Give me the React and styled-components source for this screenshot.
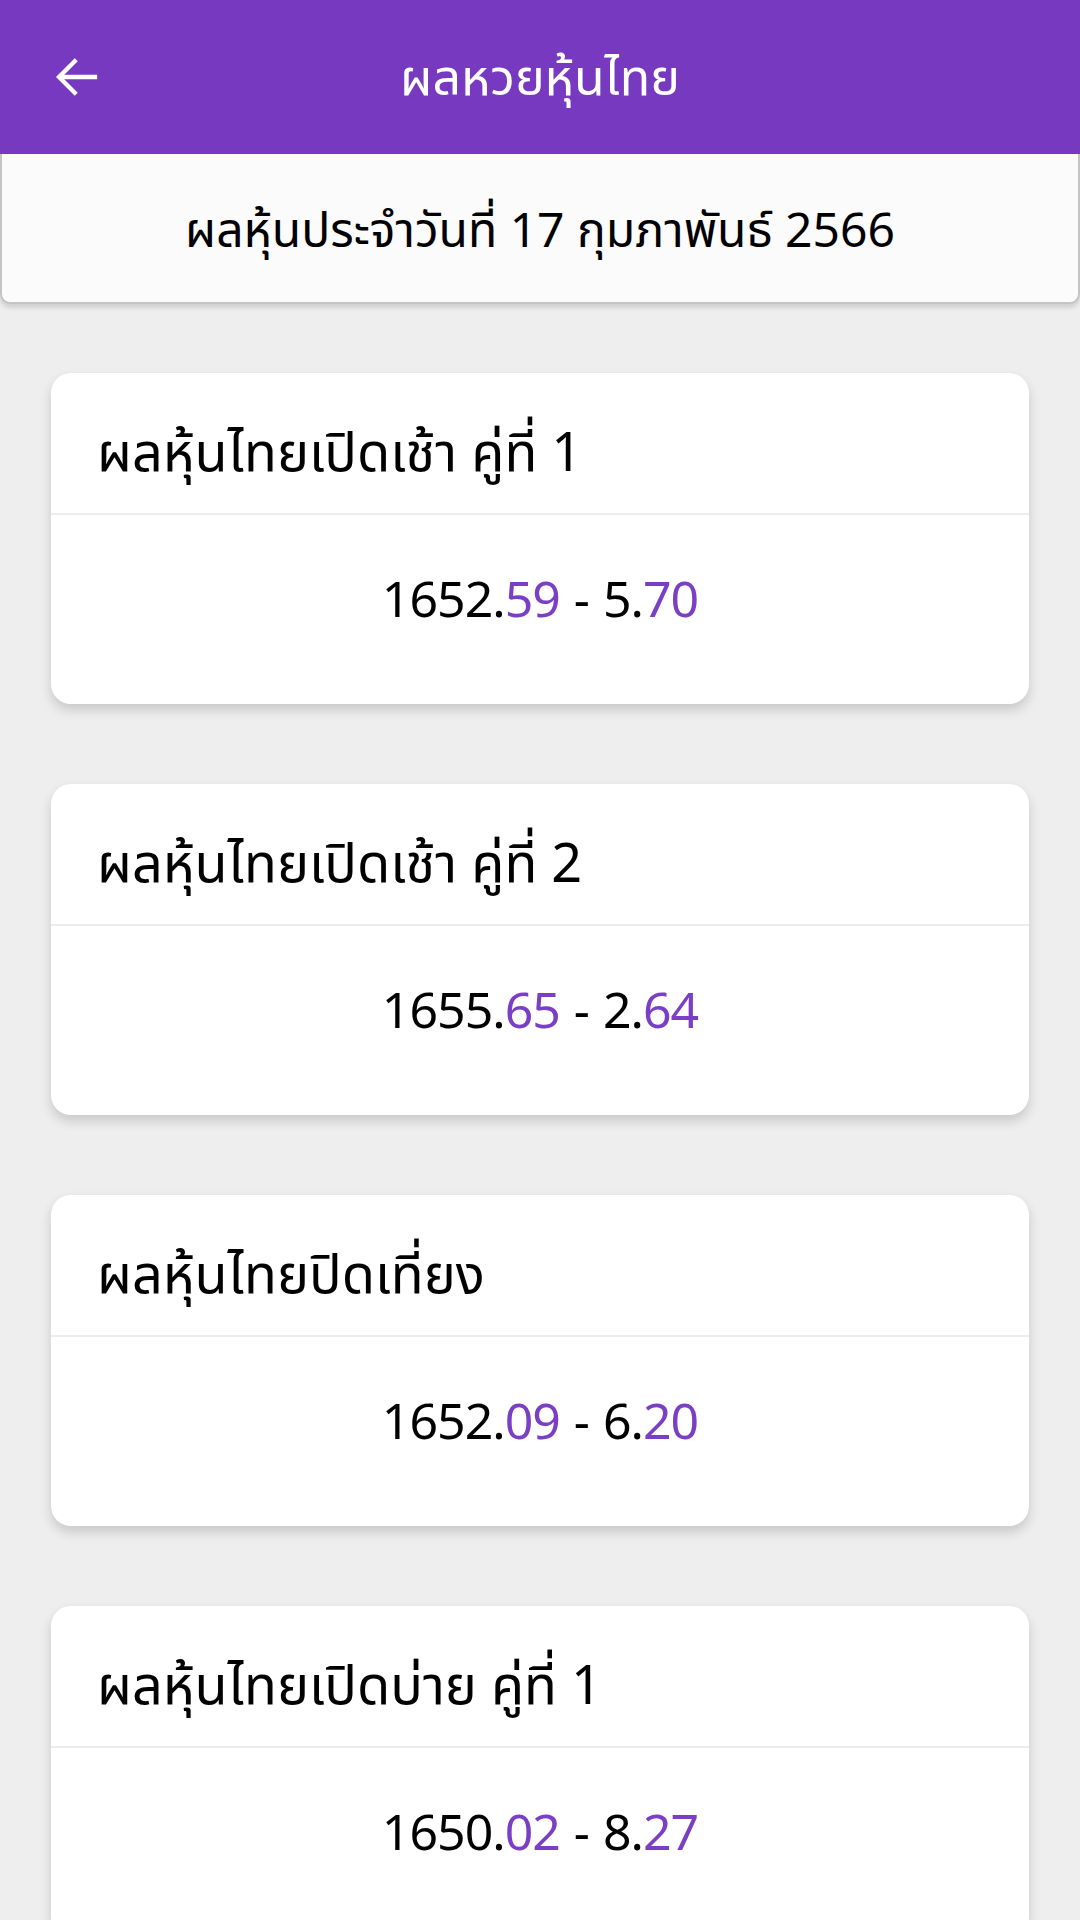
import React from "react";
import styled, { createGlobalStyle } from "styled-components";

const Global = createGlobalStyle`
  html, body { margin: 0; padding: 0; background: #eeeeee; }
  body { font-family: "Noto Sans Thai", "Noto Sans", "Open Sans", sans-serif; }
  * { box-sizing: border-box; }
`;

const Page = styled.div`
  width: 1080px;
  min-height: 1920px;
  background: #eeeeee;
  display: flex;
  flex-direction: column;
`;

const TopBar = styled.header`
  height: 154px;
  background: #7639c0;
  display: flex;
  align-items: center;
  position: relative;
  color: #fff;
`;

const BackButton = styled.button`
  position: absolute;
  left: 48px;
  top: 50%;
  transform: translateY(-50%);
  background: none;
  border: 0;
  padding: 0;
  width: 58px;
  height: 58px;
  display: flex;
  align-items: center;
  justify-content: center;
`;

const Title = styled.h1`
  flex: 1;
  margin: 0;
  padding-top: 6px;
  text-align: center;
  font-size: 50px;
  font-weight: 400;
  color: #fff;
`;

const DateBanner = styled.div`
  height: 150px;
  background: #fbfbfb;
  border: 2px solid #c4c4c4;
  border-top: 0;
  border-radius: 0 0 10px 10px;
  box-shadow: 0 4px 4px rgba(0, 0, 0, 0.12);
  display: flex;
  align-items: center;
  justify-content: center;
  padding-top: 8px;
  font-size: 48px;
  color: #000;
`;

const CardList = styled.main`
  display: flex;
  flex-direction: column;
  gap: 80px;
  padding: 69px 51px 0;
`;

const Card = styled.section`
  background: #fff;
  border-radius: 20px;
  box-shadow: 0 6px 12px rgba(0, 0, 0, 0.16);
  overflow: hidden;
`;

const CardHead = styled.div`
  height: 142px;
  display: flex;
  align-items: center;
  padding: 22px 46px 0;
  font-size: 54px;
  color: #000;
  border-bottom: 2px solid #ececec;
`;

const CardBody = styled.div`
  height: 189px;
  display: flex;
  align-items: center;
  justify-content: center;
  padding-bottom: 16px;
  font-size: 50px;
  letter-spacing: -1px;
  color: #000;
`;

const Dash = styled.span`
  margin: 0 14px;
`;

const Accent = styled.span`
  color: #7a3fc4;
`;

const data = [
  { title: "ผลหุ้นไทยเปิดเช้า คู่ที่ 1", a: ["1652.", "59"], b: ["5.", "70"] },
  { title: "ผลหุ้นไทยเปิดเช้า คู่ที่ 2", a: ["1655.", "65"], b: ["2.", "64"] },
  { title: "ผลหุ้นไทยปิดเที่ยง", a: ["1652.", "09"], b: ["6.", "20"] },
  { title: "ผลหุ้นไทยเปิดบ่าย คู่ที่ 1", a: ["1650.", "02"], b: ["8.", "27"] },
];

export default function App() {
  return (
    <Page>
      <Global />
      <TopBar>
        <BackButton aria-label="back">
          <svg width="54" height="54" viewBox="0 0 24 24" fill="none" stroke="#fff" strokeWidth="1.9" strokeLinecap="square">
            <path d="M20 12H5" />
            <path d="M11 5l-7 7 7 7" />
          </svg>
        </BackButton>
        <Title>ผลหวยหุ้นไทย</Title>
      </TopBar>
      <DateBanner>ผลหุ้นประจำวันที่ 17 กุมภาพันธ์ 2566</DateBanner>
      <CardList>
        {data.map((d) => (
          <Card key={d.title}>
            <CardHead>{d.title}</CardHead>
            <CardBody>
              {d.a[0]}
              <Accent>{d.a[1]}</Accent>
              <Dash>-</Dash>
              {d.b[0]}
              <Accent>{d.b[1]}</Accent>
            </CardBody>
          </Card>
        ))}
      </CardList>
    </Page>
  );
}
